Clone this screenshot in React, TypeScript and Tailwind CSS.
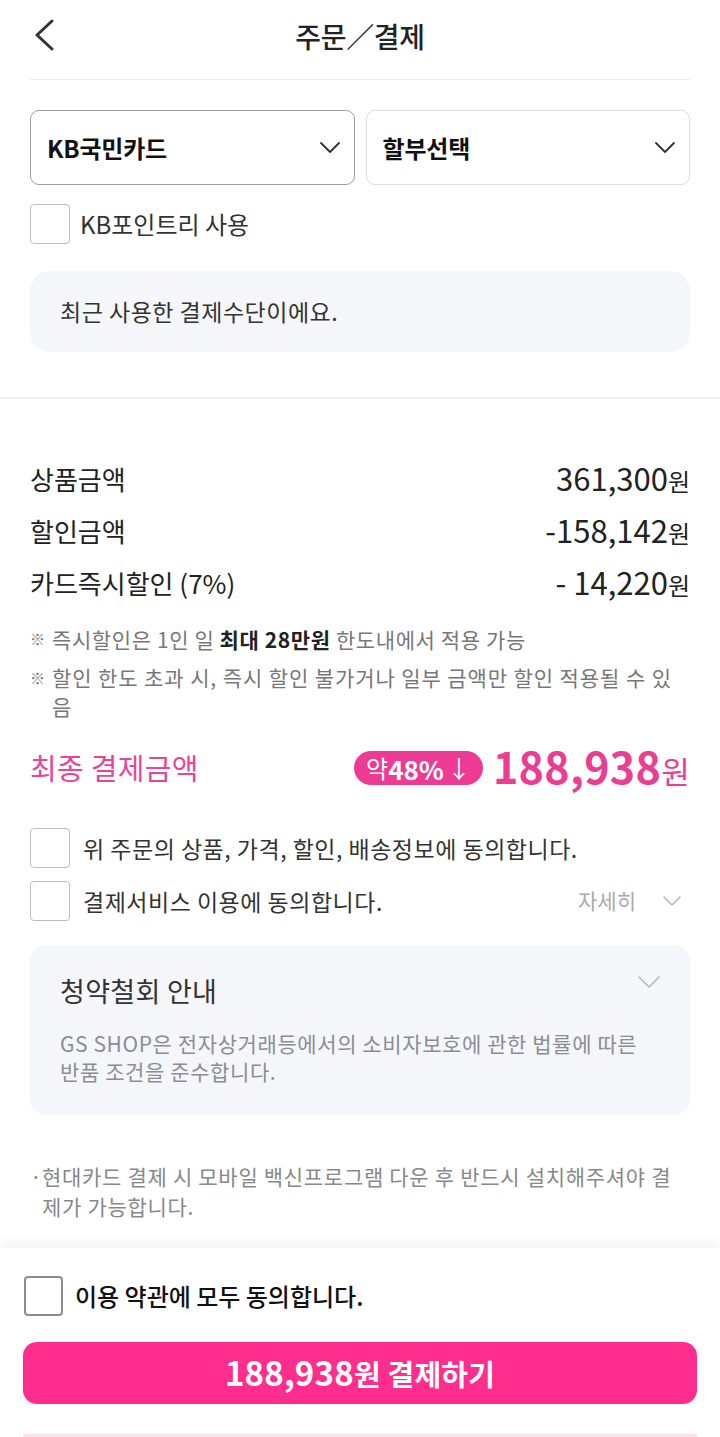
import React from "react";

const F = { fontFamily: '"Noto Sans CJK KR", "Noto Sans", sans-serif' };

function Chevron({ className = "", color = "#333", w = 20, h = 11, sw = 1.8 }: { className?: string; color?: string; w?: number; h?: number; sw?: number }) {
  return (
    <svg className={className} width={w} height={h} viewBox={`0 0 ${w} ${h}`} fill="none">
      <path d={`M1 1 L${w / 2} ${h - 1} L${w - 1} 1`} stroke={color} strokeWidth={sw} strokeLinecap="round" strokeLinejoin="round" />
    </svg>
  );
}

function Box() {
  return <div className="shrink-0 w-[40px] h-[40px] rounded-[4px] border-[1.5px] border-[#bdbdbd] bg-white" />;
}

export default function App() {
  return (
    <div style={F} className="w-[720px] h-[1437px] bg-white relative overflow-hidden text-[#222]">
      {/* Header */}
      <div className="h-[79px] flex items-center justify-center relative">
        <svg className="absolute left-[33px] top-[19px]" width="22" height="32" viewBox="0 0 22 32" fill="none">
          <path d="M19 2 L4 16 L19 30" stroke="#333" strokeWidth="3" strokeLinecap="round" strokeLinejoin="round" />
        </svg>
        <div className="text-[28px] font-medium text-[#222] -mt-[7px] tracking-[-0.3px]">주문／결제</div>
      </div>
      <div className="mx-[30px] h-px bg-[#ececec]" />

      {/* Card selection */}
      <div className="px-[30px] pt-[30px]">
        <div className="flex gap-[11px]">
          <div className="flex-1 h-[75px] rounded-[9px] border border-[#9e9e9e] flex items-center justify-between pl-[16px] pr-[14px]">
            <span className="text-[24px] font-bold text-[#111] tracking-[-0.2px]">KB국민카드</span>
            <Chevron />
          </div>
          <div className="flex-1 h-[75px] rounded-[9px] border border-[#dcdcdc] flex items-center justify-between pl-[16px] pr-[14px]">
            <span className="text-[24px] font-bold text-[#111] tracking-[-0.2px]">할부선택</span>
            <Chevron />
          </div>
        </div>
        <div className="flex items-center gap-[10px] mt-[19px]">
          <Box />
          <span className="text-[24px] text-[#333] tracking-[0px]">KB포인트리 사용</span>
        </div>
        <div className="mt-[27px] h-[81px] rounded-[20px] bg-[#f5f6f9] flex items-center px-[30px]">
          <span className="text-[23px] text-[#333] tracking-[0.5px]">최근 사용한 결제수단이에요.</span>
        </div>
      </div>
      <div className="mt-[45px] h-[2px] bg-[#f0f0f0]" />

      {/* Amounts */}
      <div className="px-[30px] pt-[61px]">
        <div className="flex flex-col gap-[16px]">
          {[
            ["상품금액", "361,300"],
            ["할인금액", "-158,142"],
            ["카드즉시할인 (7%)", "- 14,220"],
          ].map(([l, v]) => (
            <div key={l} className="flex justify-between items-center h-[36px]">
              <span className="text-[26px] text-[#222] tracking-[0px]">{l}</span>
              <span className="text-[31px] text-[#222] tracking-[0px]">
                {v}
                <span className="text-[24px]">원</span>
              </span>
            </div>
          ))}
        </div>
        <div className="mt-[24px] text-[21px] text-[#777] leading-[30px] tracking-[0.6px]">
          <div className="flex">
            <span className="w-[22px] shrink-0 text-[15px]">※</span>
            <span>
              즉시할인은 1인 일 <b className="font-bold text-[#222]">최대 28만원</b> 한도내에서 적용 가능
            </span>
          </div>
          <div className="flex mt-[9px] leading-[29px]">
            <span className="w-[22px] shrink-0 text-[15px]">※</span>
            <span className="tracking-[0.9px]">
              할인 한도 초과 시, 즉시 할인 불가거나 일부 금액만 할인 적용될 수 있
              <br />음
            </span>
          </div>
        </div>

        <div className="flex justify-between items-center mt-[22px] h-[50px]">
          <span className="text-[29px] text-[#e8449a] tracking-[0.3px]">최종 결제금액</span>
          <div className="flex items-center gap-[10px]">
            <div className="h-[34px] px-[12px] rounded-full bg-[#ed3a95] text-white flex items-center text-[26px] font-bold tracking-[0px]">
              <span className="font-normal text-[24px]">약</span>48%
              <span className="font-normal text-[24px] ml-[3px]">↓</span>
            </div>
            <span className="text-[43px] font-bold text-[#ea3d93] tracking-[0.3px] leading-[50px]">
              188,938<span className="text-[31px] font-normal">원</span>
            </span>
          </div>
        </div>

        {/* Agreements */}
        <div className="mt-[35px] flex flex-col gap-[13px]">
          <div className="flex items-center gap-[13px]">
            <Box />
            <span className="text-[23px] text-[#333] tracking-[0.5px]">위 주문의 상품, 가격, 할인, 배송정보에 동의합니다.</span>
          </div>
          <div className="flex items-center gap-[13px]">
            <Box />
            <span className="text-[23px] text-[#333] tracking-[0.5px] flex-1">결제서비스 이용에 동의합니다.</span>
            <span className="text-[21px] text-[#aaa] mr-[14px]">자세히</span>
            <Chevron color="#b5b5b5" w={18} h={10} sw={1.5} className="mr-[9px]" />
          </div>
        </div>

        <div className="mt-[24px] rounded-[16px] bg-[#f5f6f9] px-[30px] pt-[28px] pb-[30px] relative">
          <svg className="absolute right-[30px] top-[31px]" width="22" height="12" viewBox="0 0 22 12" fill="none">
            <path d="M1 1 L11 11 L21 1" stroke="#b5b8c0" strokeWidth="1.5" strokeLinecap="round" strokeLinejoin="round" />
          </svg>
          <div className="text-[27px] text-[#333] tracking-[0.3px] leading-[36px]">청약철회 안내</div>
          <div className="mt-[20px] text-[21px] text-[#8a8d94] leading-[28px] tracking-[0.6px]">
            GS SHOP은 전자상거래등에서의 소비자보호에 관한 법률에 따른
            <br />
            반품 조건을 준수합니다.
          </div>
        </div>

        <div className="mt-[46px] flex text-[21px] text-[#888] leading-[30px] tracking-[0.7px]">
          <span className="w-[12px] shrink-0">·</span>
          <span>
            현대카드 결제 시 모바일 백신프로그램 다운 후 반드시 설치해주셔야 결
            <br />
            제가 가능합니다.
          </span>
        </div>
      </div>

      {/* Bottom fixed bar */}
      <div className="absolute left-0 right-0 top-[1248px] bottom-0 bg-white shadow-[0_-6px_10px_rgba(0,0,0,0.05)] px-[23px] pt-[28px]">
        <div className="flex items-center gap-[12px] pl-[1px]">
          <div className="w-[39px] h-[40px] rounded-[4px] border-[2px] border-[#8c8c8c] bg-white" />
          <span className="text-[24px] font-medium text-[#111] tracking-[0px]">이용 약관에 모두 동의합니다.</span>
        </div>
        <div className="mt-[26px] h-[62px] rounded-[14px] bg-[#ff2d8e] flex items-center justify-center">
          <span className="text-white text-[33px] font-bold tracking-[0.2px]">
            188,938<span className="text-[29px]">원 결제하기</span>
          </span>
        </div>
        <div className="absolute left-[23px] right-[23px] bottom-0 h-[3px] bg-[#ffe0ef]" />
      </div>
    </div>
  );
}
